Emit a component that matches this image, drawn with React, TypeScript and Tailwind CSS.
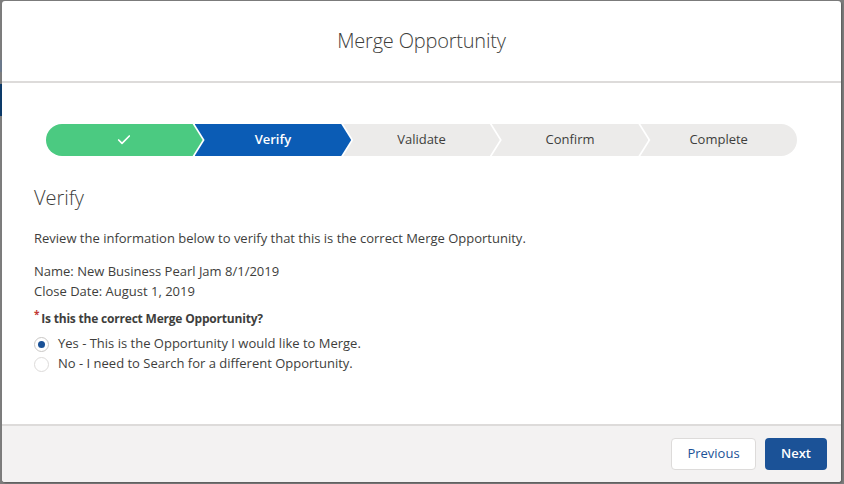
import React, { useState } from 'react';
import { Check } from 'lucide-react';

const steps = ['done', 'Verify', 'Validate', 'Confirm', 'Complete'];

function PathStep({ label, index }: { label: string; index: number }) {
  const first = index === 0;
  const last = index === steps.length - 1;
  const shape = first
    ? 'rounded-l-full [clip-path:polygon(0_0,calc(100%-10px)_0,100%_50%,calc(100%-10px)_100%,0_100%)]'
    : last
      ? 'rounded-r-full [clip-path:polygon(0_0,100%_0,100%_100%,0_100%,10px_50%)]'
      : '[clip-path:polygon(0_0,calc(100%-10px)_0,100%_50%,calc(100%-10px)_100%,0_100%,10px_50%)]';
  const color =
    index === 0
      ? 'bg-[#4bca81] text-white'
      : index === 1
        ? 'bg-[#0b5cb5] text-white font-semibold'
        : 'bg-[#ecebea] text-[#3e3e3c]';
  return (
    <div
      className={`flex h-8 flex-1 items-center justify-center text-[13px] ${first ? '' : '-ml-[8px]'} ${shape} ${color}`}
    >
      {first ? <Check className="h-4 w-4" strokeWidth={2.5} /> : label}
    </div>
  );
}

export default function App() {
  const [answer, setAnswer] = useState('yes');

  const options = [
    { id: 'yes', text: 'Yes - This is the Opportunity I would like to Merge.' },
    { id: 'no', text: 'No - I need to Search for a different Opportunity.' },
  ];

  return (
    <div className="flex h-[484px] w-[844px] bg-[#7d7d7d] font-['Open_Sans',sans-serif] text-[#3e3e3c]">
      <div className="flex w-[2px] flex-col">
        <div className="h-[60px]" />
        <div className="h-[12px] bg-[#6c7a8d]" />
        <div className="h-[12px]" />
        <div className="h-[32px] bg-[#0d3b6a]" />
      </div>
      <div className="mb-[2px] mt-[1px] flex flex-1 flex-col overflow-hidden rounded-[3px] bg-white shadow-[1px_1px_2px_rgba(0,0,0,0.3)]">
        <header className="flex h-[82px] items-center justify-center border-b-2 border-[#dddbda]">
          <h1 className="text-[20px] font-light tracking-[-0.2px] text-[#3e3e3c]">Merge Opportunity</h1>
        </header>

        <main className="flex-1 px-[32px] pt-[41px]">
          <div className="flex px-[12px]">
            {steps.map((s, i) => (
              <PathStep key={s} label={s} index={i} />
            ))}
          </div>

          <h2 className="mt-[32px] text-[20px] font-light leading-none text-[#3e3e3c]">Verify</h2>
          <p className="mt-[20px] text-[13px] leading-5">
            Review the information below to verify that this is the correct Merge Opportunity.
          </p>
          <div className="mt-[13px] text-[13px] leading-5">
            <div>Name: New Business Pearl Jam 8/1/2019</div>
            <div>Close Date: August 1, 2019</div>
          </div>

          <div className="mt-[8px] flex items-start text-[12px] font-bold tracking-[-0.2px]">
            <span className="mr-[2px] text-[10px] leading-none text-[#c23934]">*</span>
            <span className="leading-5">Is this the correct Merge Opportunity?</span>
          </div>

          <div className="mt-[5px] flex flex-col">
            {options.map((o) => (
              <label key={o.id} className="flex h-5 cursor-pointer items-center text-[13px]">
                <span
                  className={`mr-[9px] flex h-[15px] w-[15px] items-center justify-center rounded-full border bg-white ${
                    answer === o.id ? 'border-[#c9c7c5]' : 'border-[#dddbda]'
                  }`}
                  onClick={() => setAnswer(o.id)}
                >
                  {answer === o.id && <span className="h-[7px] w-[7px] rounded-full bg-[#1b5297]" />}
                </span>
                {o.text}
              </label>
            ))}
          </div>
        </main>

        <footer className="flex h-[58px] items-center justify-end gap-[9px] border-t-2 border-[#dddbda] bg-[#f3f2f2] px-[14px]">
          <button className="h-8 w-[85px] rounded-[4px] border border-[#dddbda] bg-white text-[13px] text-[#1b5297]">
            Previous
          </button>
          <button className="h-8 w-[62px] rounded-[4px] bg-[#1b5297] text-[13px] font-semibold text-white">Next</button>
        </footer>
      </div>
      <div className="w-[3px]" />
    </div>
  );
}
